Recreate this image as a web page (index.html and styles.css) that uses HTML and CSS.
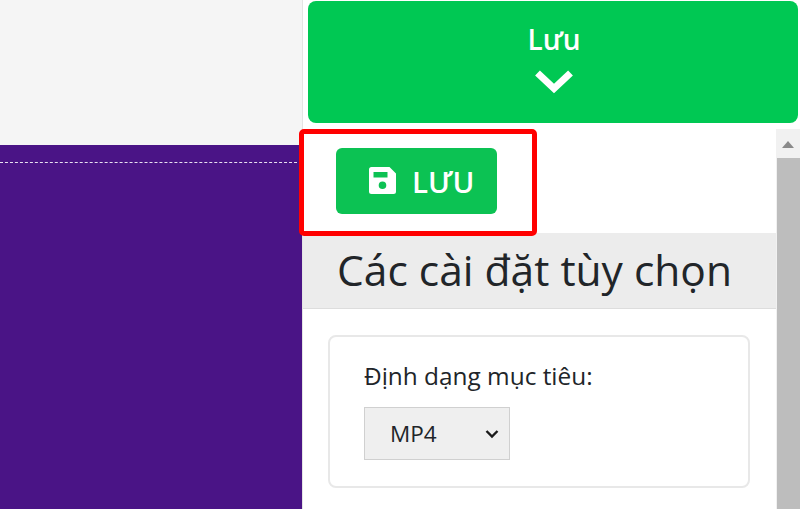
FILE: index.html
```html
<!DOCTYPE html>
<html lang="vi">
<head>
<meta charset="utf-8">
<title>Lưu</title>
<link rel="stylesheet" href="styles.css">
</head>
<body>
<div class="app">
  <aside class="left">
    <div class="left-top"></div>
    <div class="canvas"><div class="dash"></div></div>
  </aside>
  <section class="right">
    <div class="top">
      <button class="save-big">
        <span class="save-big-label">Lưu</span>
        <svg class="chevron" width="40" height="26" viewBox="0 0 40 26"><path d="M3.500 5L20 20.500L36.500 5" fill="none" stroke="#fff" stroke-width="7"/></svg>
      </button>
    </div>
    <div class="panel">
      <div class="content">
        <div class="action">
          <button class="save-small">
            <svg class="disk" width="27" height="27" viewBox="0 0 27 27"><path fill-rule="evenodd" fill="#fff" d="M2.500 0H20.500L27 6.500V24.500A2.500 2.500 0 0 1 24.500 27H2.500A2.500 2.500 0 0 1 0 24.500V2.500A2.500 2.500 0 0 1 2.500 0ZM4.500 5V10.500H18.500V5ZM13.500 14.500A3.800 3.800 0 1 0 13.500 22.100A3.800 3.800 0 1 0 13.500 14.500Z"/></svg>
            <span>LƯU</span>
          </button>
        </div>
        <h2 class="heading">Các cài đặt tùy chọn</h2>
        <div class="card">
          <label class="field-label" for="fmt">Định dạng mục tiêu:</label>
          <div class="select-wrap">
            <select class="select" id="fmt"><option>MP4</option></select>
            <svg class="select-arrow" width="14" height="10" viewBox="0 0 14 10"><path d="M1.500 2L7 7.500L12.500 2" fill="none" stroke="#1a1a1a" stroke-width="2.400"/></svg>
          </div>
        </div>
      </div>
      <div class="scrollbar">
        <div class="scroll-up"><span class="arrow"></span></div>
        <div class="thumb"></div>
      </div>
      <div class="highlight"></div>
    </div>
  </section>
</div>
</body>
</html>
```
FILE: styles.css
```css
* { box-sizing: border-box; }
html, body { margin: 0; height: 100%; overflow: hidden; }
body { font-family: "Open Sans", "Noto Sans", sans-serif; background: #fff; }
.app { display: flex; width: 800px; height: 509px; }
.left { width: 303px; display: flex; flex-direction: column; border-right: 1px solid #e4e4e4; }
.left-top { height: 145px; background: #f5f5f5; }
.canvas { flex: 1; background: #4a1486; padding-top: 17px; }
.dash { border-top: 1px dashed #e8e0f0; }
.right { flex: 1; display: flex; flex-direction: column; min-width: 0; }
.top { height: 129px; padding: 1px 2px 6px 5px; background: #fff; }
.save-big { width: 100%; height: 100%; border: 0; border-radius: 8px; background: #00c853; color: #fff; font: inherit; display: flex; flex-direction: column; align-items: center; padding: 21px 0 0 2px; }
.save-big-label { font-size: 28px; font-weight: 600; line-height: 34px; }
.chevron { margin-top: 12px; flex: none; }
.panel { flex: 1; display: flex; position: relative; min-height: 0; }
.content { flex: 1; min-width: 0; }
.action { height: 104px; padding: 19px 0 0 33px; }
.save-small { width: 161px; height: 66px; border: 0; border-radius: 6px; background: #0cc253; color: #fff; font: inherit; font-size: 29.500px; font-weight: 600; padding: 0 0 0 33px; display: flex; align-items: center; gap: 16px; }
.disk { flex: none; margin-top: -1px; }
.heading { margin: 0; height: 76px; padding: 0 0 0 34px; background: #ececec; border-bottom: 1px solid #ddd; color: #212529; font-size: 42.500px; font-weight: 500; line-height: 74px; white-space: nowrap; overflow: hidden; }
.card { margin: 26px 26px 0 25px; height: 153px; border: 2px solid #e8e8e8; border-radius: 8px; padding: 24px 0 0 34px; }
.field-label { display: block; color: #212529; font-size: 24.400px; line-height: 30px; margin-bottom: 16px; white-space: nowrap; }
.select-wrap { position: relative; width: 146px; }
.select { display: block; width: 146px; height: 53px; border: 1px solid #d0d0d0; border-radius: 0; background: #efefef; color: #212529; font: inherit; font-size: 22.500px; padding: 0 0 0 25px; appearance: none; }
.select-arrow { position: absolute; right: 11px; top: 22px; }
.scrollbar { width: 24px; background: #f1f1f1; flex: none; display: flex; flex-direction: column; }
.scroll-up { height: 29px; display: flex; justify-content: center; padding-top: 12px; }
.arrow { width: 0; height: 0; border-left: 6px solid transparent; border-right: 6px solid transparent; border-bottom: 7px solid #8a8a8a; }
.thumb { flex: 1; margin-left: 1px; background: #bdbdbd; }
.highlight { position: absolute; left: -4px; top: 0; width: 238px; height: 107px; border: 5px solid #f00; border-radius: 5px; pointer-events: none; }
```
